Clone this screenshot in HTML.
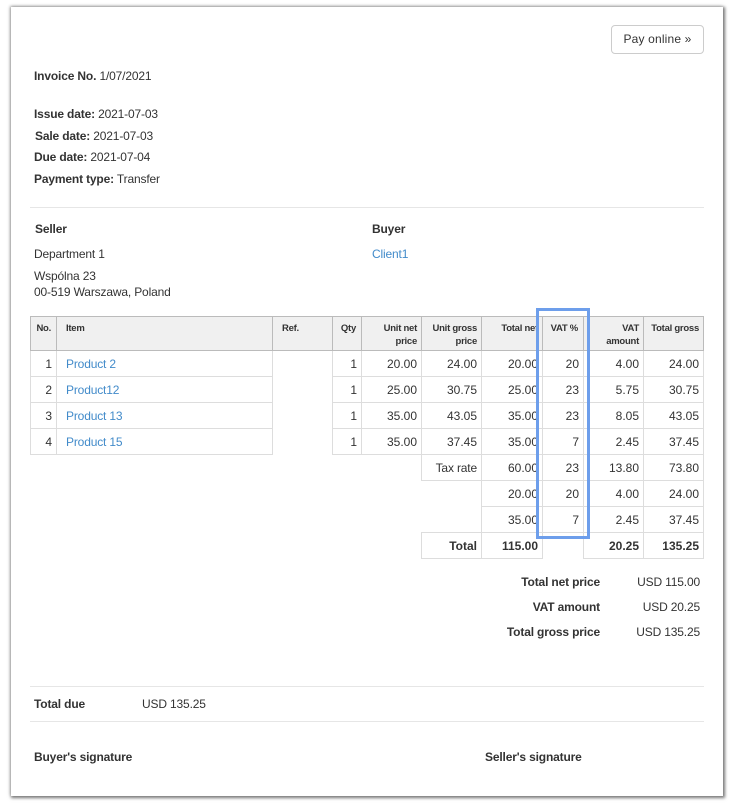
<!DOCTYPE html>
<html>
<head>
<meta charset="utf-8">
<style>
html,body{margin:0;padding:0;background:#fff;}
body{width:732px;height:806px;position:relative;overflow:hidden;font-family:"Liberation Sans",Arial,sans-serif;font-size:12px;color:#333;}
#page{position:absolute;left:11px;top:7px;width:712px;height:789px;background:#fff;box-shadow:1px 1px 3px 1px #777,-1px -1px 3px #ccc;}
.t{position:absolute;white-space:nowrap;line-height:16px;letter-spacing:-.16px;}
.hr{position:absolute;left:30px;width:674px;height:1px;background:#e6e6e6;}
b{font-weight:bold;}
a{color:#428bca;text-decoration:none;}
#btn{position:absolute;left:611px;top:25px;width:91px;height:27px;border:1px solid #ccc;border-radius:4px;text-align:center;line-height:26px;color:#333;background:#fff;letter-spacing:.16px;}
table{position:absolute;left:30px;top:316px;width:673px;table-layout:fixed;border-collapse:collapse;font-size:12px;}
th{background:#f0f0f0;border:1px solid #bbb;font-size:9.5px;letter-spacing:-.25px;font-weight:bold;vertical-align:top;text-align:right;padding:5px 4px 0;line-height:13px;height:28px;box-sizing:content-box;color:#333;overflow:hidden;white-space:normal;}
th.l{text-align:left;padding-left:9px;}
th.i{padding-left:9px;text-align:left;}
th.c{padding-right:5px;padding-left:0;}
td{border:1px solid #ddd;text-align:right;padding:0 4px;height:25px;line-height:16px;white-space:nowrap;box-sizing:content-box;}
td.i{text-align:left;padding-left:9px;}
td.i a,.s{letter-spacing:-.16px;}
td.n{border:none;}
#hl{position:absolute;left:536px;top:308px;width:48px;height:225px;border:3px solid #6d9eeb;}
</style>
</head>
<body>
<div id="page"></div>
<div id="btn">Pay online »</div>
<div class="t" style="left:34px;top:68px"><b>Invoice No.</b> 1/07/2021</div>
<div class="t" style="left:34px;top:106px"><b>Issue date:</b> 2021-07-03</div>
<div class="t" style="left:35px;top:128px"><b>Sale date:</b> 2021-07-03</div>
<div class="t" style="left:34px;top:149px"><b>Due date:</b> 2021-07-04</div>
<div class="t" style="left:34px;top:171px"><b>Payment type:</b> Transfer</div>
<div class="hr" style="top:207px"></div>
<div class="t" style="left:35px;top:221px"><b>Seller</b></div>
<div class="t" style="left:372px;top:221px"><b>Buyer</b></div>
<div class="t" style="left:34px;top:246px">Department 1</div>
<div class="t" style="left:372px;top:246px"><a>Client1</a></div>
<div class="t" style="left:34px;top:268px">Wspólna 23</div>
<div class="t" style="left:34px;top:284px">00-519 Warszawa, Poland</div>

<table>
<colgroup><col style="width:26px"><col style="width:216px"><col style="width:60px"><col style="width:29px"><col style="width:60px"><col style="width:60px"><col style="width:61px"><col style="width:41px"><col style="width:60px"><col style="width:60px"></colgroup>
<tr><th class="c">No.</th><th class="i">Item</th><th class="l">Ref.</th><th class="c">Qty</th><th>Unit net price</th><th>Unit gross price</th><th>Total net</th><th class="c">VAT %</th><th>VAT amount</th><th>Total gross</th></tr>
<tr><td>1</td><td class="i"><a>Product 2</a></td><td class="n"></td><td>1</td><td>20.00</td><td>24.00</td><td>20.00</td><td>20</td><td>4.00</td><td>24.00</td></tr>
<tr><td>2</td><td class="i"><a>Product12</a></td><td class="n"></td><td>1</td><td>25.00</td><td>30.75</td><td>25.00</td><td>23</td><td>5.75</td><td>30.75</td></tr>
<tr><td>3</td><td class="i"><a>Product 13</a></td><td class="n"></td><td>1</td><td>35.00</td><td>43.05</td><td>35.00</td><td>23</td><td>8.05</td><td>43.05</td></tr>
<tr><td>4</td><td class="i"><a>Product 15</a></td><td class="n"></td><td>1</td><td>35.00</td><td>37.45</td><td>35.00</td><td>7</td><td>2.45</td><td>37.45</td></tr>
<tr><td class="n" colspan="5"></td><td class="s">Tax rate</td><td>60.00</td><td>23</td><td>13.80</td><td>73.80</td></tr>
<tr><td class="n" colspan="5"></td><td class="n"></td><td>20.00</td><td>20</td><td>4.00</td><td>24.00</td></tr>
<tr><td class="n" colspan="5"></td><td class="n"></td><td>35.00</td><td>7</td><td>2.45</td><td>37.45</td></tr>
<tr><td class="n" colspan="5"></td><td><b>Total</b></td><td><b>115.00</b></td><td class="n"></td><td><b>20.25</b></td><td><b>135.25</b></td></tr>
</table>
<div id="hl"></div>

<div class="t" style="right:132px;top:574px"><b>Total net price</b></div>
<div class="t" style="right:32px;top:574px">USD 115.00</div>
<div class="t" style="right:132px;top:599px"><b>VAT amount</b></div>
<div class="t" style="right:32px;top:599px">USD 20.25</div>
<div class="t" style="right:132px;top:624px"><b>Total gross price</b></div>
<div class="t" style="right:32px;top:624px">USD 135.25</div>

<div class="hr" style="top:686px"></div>
<div class="t" style="left:34px;top:696px"><b>Total due</b></div>
<div class="t" style="left:142px;top:696px">USD 135.25</div>
<div class="hr" style="top:721px"></div>
<div class="t" style="left:34px;top:749px"><b>Buyer's signature</b></div>
<div class="t" style="left:485px;top:749px"><b>Seller's signature</b></div>
</body>
</html>
